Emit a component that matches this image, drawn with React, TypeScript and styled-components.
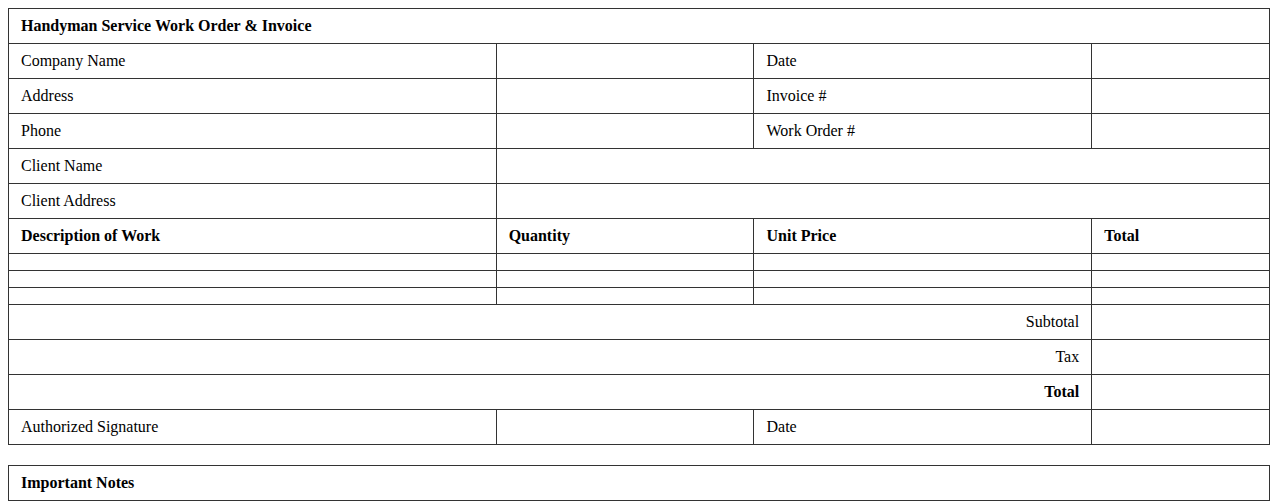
import styled, { createGlobalStyle } from "styled-components";

const GlobalStyle = createGlobalStyle`
  body {
    margin: 8px;
    font-family: "Liberation Serif", "Times New Roman", serif;
    font-size: 16px;
    color: #000;
    background: #fff;
  }
`;

const Sheet = styled.table<{ $gap?: boolean }>`
  width: 100%;
  border-collapse: collapse;
  table-layout: fixed;
  margin-top: ${(p) => (p.$gap ? "20px" : "0")};
`;

const Column = styled.col<{ $w: string }>`
  width: ${(p) => p.$w};
`;

const Cell = styled.td<{ $bold?: boolean; $right?: boolean }>`
  border: 1px solid #333;
  padding: 8px 12px;
  font-weight: ${(p) => (p.$bold ? "bold" : "normal")};
  text-align: ${(p) => (p.$right ? "right" : "left")};
  line-height: 18px;
`;

const BlankCell = styled.td`
  border: 1px solid #333;
  padding: 8px 12px;
  height: 0;
  line-height: 0;
`;

const lineItems = [1, 2, 3];

function App() {
  return (
    <>
      <GlobalStyle />
      <Sheet>
        <colgroup>
          <Column $w="38.67%" />
          <Column $w="20.45%" />
          <Column $w="26.78%" />
          <Column $w="14.10%" />
        </colgroup>
        <tbody>
          <tr>
            <Cell $bold colSpan={4}>
              Handyman Service Work Order &amp; Invoice
            </Cell>
          </tr>
          <tr>
            <Cell>Company Name</Cell>
            <Cell></Cell>
            <Cell>Date</Cell>
            <Cell></Cell>
          </tr>
          <tr>
            <Cell>Address</Cell>
            <Cell></Cell>
            <Cell>Invoice #</Cell>
            <Cell></Cell>
          </tr>
          <tr>
            <Cell>Phone</Cell>
            <Cell></Cell>
            <Cell>Work Order #</Cell>
            <Cell></Cell>
          </tr>
          <tr>
            <Cell>Client Name</Cell>
            <Cell colSpan={3}></Cell>
          </tr>
          <tr>
            <Cell>Client Address</Cell>
            <Cell colSpan={3}></Cell>
          </tr>
          <tr>
            <Cell $bold>Description of Work</Cell>
            <Cell $bold>Quantity</Cell>
            <Cell $bold>Unit Price</Cell>
            <Cell $bold>Total</Cell>
          </tr>
          {lineItems.map((n) => (
            <tr key={n}>
              <BlankCell />
              <BlankCell />
              <BlankCell />
              <BlankCell />
            </tr>
          ))}
          <tr>
            <Cell $right colSpan={3}>
              Subtotal
            </Cell>
            <Cell></Cell>
          </tr>
          <tr>
            <Cell $right colSpan={3}>
              Tax
            </Cell>
            <Cell></Cell>
          </tr>
          <tr>
            <Cell $right $bold colSpan={3}>
              Total
            </Cell>
            <Cell></Cell>
          </tr>
          <tr>
            <Cell>Authorized Signature</Cell>
            <Cell></Cell>
            <Cell>Date</Cell>
            <Cell></Cell>
          </tr>
        </tbody>
      </Sheet>
      <Sheet $gap>
        <tbody>
          <tr>
            <Cell $bold>Important Notes</Cell>
          </tr>
        </tbody>
      </Sheet>
    </>
  );
}

export default App;
